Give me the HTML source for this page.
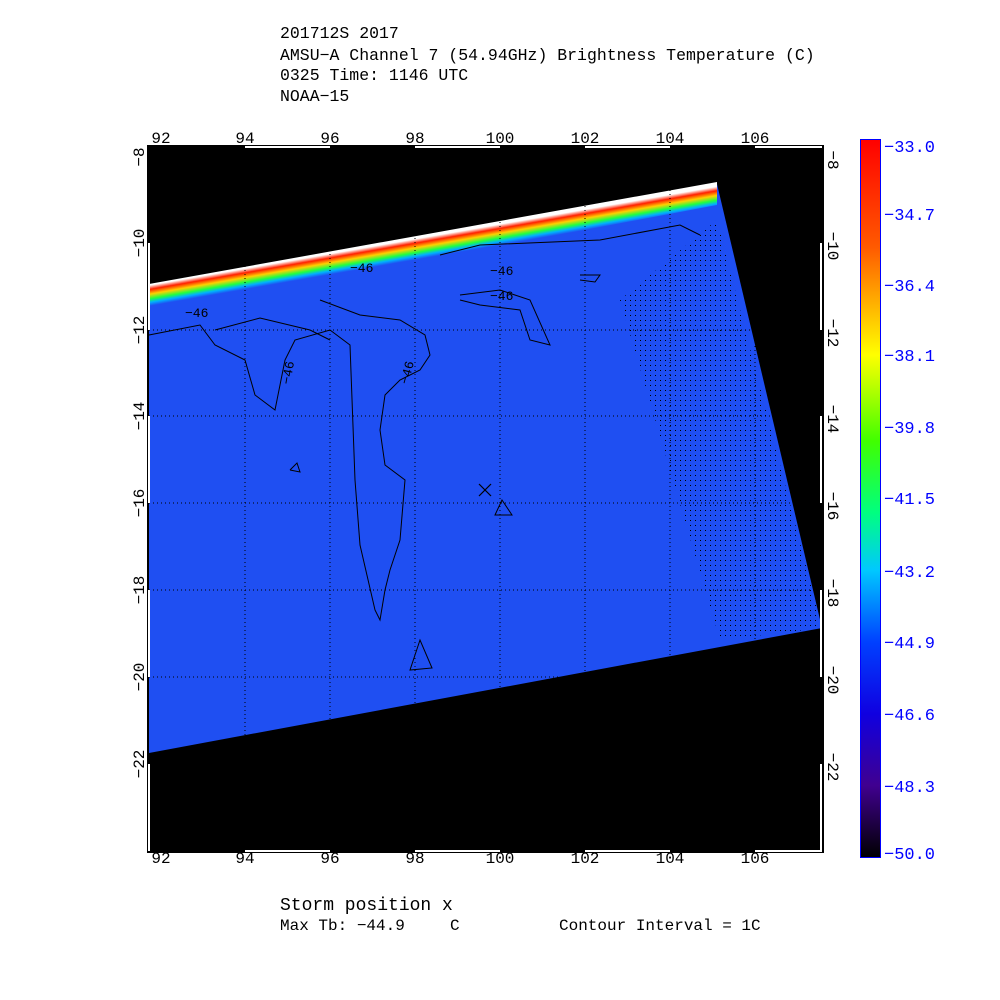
<!DOCTYPE html>
<html><head><style>
body{margin:0;background:#fff;}
svg{display:block;font-family:"Liberation Mono","DejaVu Sans Mono",monospace;}
</style></head><body>
<svg width="1000" height="1000" viewBox="0 0 1000 1000" xmlns="http://www.w3.org/2000/svg">
<defs>
<linearGradient id="cb" x1="0" y1="0" x2="0" y2="1">
<stop offset="0" stop-color="#ff0000"/>
<stop offset="0.15" stop-color="#ff5a00"/>
<stop offset="0.3" stop-color="#ffff00"/>
<stop offset="0.42" stop-color="#40ff00"/>
<stop offset="0.52" stop-color="#00ff80"/>
<stop offset="0.6" stop-color="#00c8ff"/>
<stop offset="0.7" stop-color="#0040ff"/>
<stop offset="0.8" stop-color="#1000e0"/>
<stop offset="0.9" stop-color="#400090"/>
<stop offset="1" stop-color="#000000"/>
</linearGradient>
<linearGradient id="band" gradientUnits="userSpaceOnUse" x1="433" y1="233" x2="437" y2="256">
<stop offset="0" stop-color="#fff"/>
<stop offset="0.12" stop-color="#fff"/>
<stop offset="0.3" stop-color="#ff2000"/>
<stop offset="0.5" stop-color="#ffd000"/>
<stop offset="0.7" stop-color="#20ff40"/>
<stop offset="0.85" stop-color="#00b0ff"/>
<stop offset="1" stop-color="#1f4ff2"/>
</linearGradient>
<pattern id="hatch" width="5" height="5" patternUnits="userSpaceOnUse">
<rect width="5" height="5" fill="#1f4ff2"/>
<rect x="0" y="0" width="1" height="1" fill="#000"/>
</pattern>
</defs>
<g font-size="16.5" fill="#000">
<text x="280" y="38">201712S 2017</text>
<text x="280" y="60">AMSU−A Channel 7 (54.94GHz) Brightness Temperature (C)</text>
<text x="280" y="80">0325 Time: 1146 UTC</text>
<text x="280" y="101">NOAA−15</text>
</g>
<rect x="147" y="145" width="677" height="708" fill="#000"/>
<polygon points="149,288 717,184 822,628 149,753" fill="#1f4ff2"/>
<polygon points="620,300 717,220 822,628 720,640" fill="url(#hatch)"/>
<polygon points="149,284 717,182 717,205 149,312" fill="url(#band)"/>
<polygon points="760,330 770,350 768,385 780,400 790,440 800,470 760,300" fill="#000"/>
<g stroke="#000" stroke-width="1" fill="none">
<polyline points="149,335 200,325 215,345 245,360 255,395 275,410 285,360 295,340 330,330 350,345 355,480 360,545 375,610 380,620 385,590 390,570 400,540 405,480 385,465 380,430 385,395 400,380 420,370 430,355 425,335 400,320 360,315 320,300"/>
<polyline points="215,330 260,318 310,330 330,340"/>
<polyline points="460,295 500,290 530,300 550,345 530,340 520,310 480,305 460,300"/>
<polyline points="580,275 600,275 595,282 580,280"/>
<polygon points="410,670 420,640 432,668"/>
<polygon points="495,515 502,500 512,515"/>
<polyline points="290,470 297,463 300,472 290,470"/>
<polyline points="440,255 480,245 600,240 680,225 700,235"/>
</g>
<g stroke="#000" stroke-dasharray="1,3" stroke-width="1">
<line x1="245" y1="146" x2="245" y2="851"/><line x1="330" y1="146" x2="330" y2="851"/>
<line x1="415" y1="146" x2="415" y2="851"/><line x1="500" y1="146" x2="500" y2="851"/>
<line x1="585" y1="146" x2="585" y2="851"/><line x1="670" y1="146" x2="670" y2="851"/>
<line x1="755" y1="146" x2="755" y2="851"/>
<line x1="149" y1="330" x2="822" y2="330"/><line x1="149" y1="416" x2="822" y2="416"/>
<line x1="149" y1="503" x2="822" y2="503"/><line x1="149" y1="590" x2="822" y2="590"/>
<line x1="149" y1="677" x2="822" y2="677"/>
</g>
<g stroke="#000" stroke-width="1.2"><line x1="479" y1="484" x2="491" y2="496"/><line x1="491" y1="484" x2="479" y2="496"/></g>
<rect x="147.5" y="145.5" width="676" height="707" fill="none" stroke="#000"/>
<g stroke="#fff" stroke-width="2">
<line x1="245" y1="147" x2="330" y2="147"/><line x1="415" y1="147" x2="500" y2="147"/><line x1="585" y1="147" x2="670" y2="147"/><line x1="755" y1="147" x2="822" y2="147"/>
<line x1="245" y1="851" x2="330" y2="851"/><line x1="415" y1="851" x2="500" y2="851"/><line x1="585" y1="851" x2="670" y2="851"/><line x1="755" y1="851" x2="822" y2="851"/>
<line x1="149" y1="243" x2="149" y2="330"/><line x1="149" y1="416" x2="149" y2="503"/><line x1="149" y1="590" x2="149" y2="677"/><line x1="149" y1="764" x2="149" y2="851"/>
<line x1="821" y1="243" x2="821" y2="330"/><line x1="821" y1="416" x2="821" y2="503"/><line x1="821" y1="590" x2="821" y2="677"/><line x1="821" y1="764" x2="821" y2="851"/>
</g>
<g font-size="16" fill="#000" text-anchor="middle">
<text x="161" y="143">92</text><text x="245" y="143">94</text><text x="330" y="143">96</text><text x="415" y="143">98</text><text x="500" y="143">100</text><text x="585" y="143">102</text><text x="670" y="143">104</text><text x="755" y="143">106</text>
<text x="161" y="863">92</text><text x="245" y="863">94</text><text x="330" y="863">96</text><text x="415" y="863">98</text><text x="500" y="863">100</text><text x="585" y="863">102</text><text x="670" y="863">104</text><text x="755" y="863">106</text>
</g>
<g font-size="16" fill="#000" text-anchor="middle">
<text transform="translate(144,157) rotate(-90)">−8</text><text transform="translate(144,243) rotate(-90)">−10</text><text transform="translate(144,330) rotate(-90)">−12</text><text transform="translate(144,416) rotate(-90)">−14</text><text transform="translate(144,503) rotate(-90)">−16</text><text transform="translate(144,590) rotate(-90)">−18</text><text transform="translate(144,677) rotate(-90)">−20</text><text transform="translate(144,764) rotate(-90)">−22</text>
<text transform="translate(828,160) rotate(90)">−8</text><text transform="translate(828,246) rotate(90)">−10</text><text transform="translate(828,333) rotate(90)">−12</text><text transform="translate(828,419) rotate(90)">−14</text><text transform="translate(828,506) rotate(90)">−16</text><text transform="translate(828,593) rotate(90)">−18</text><text transform="translate(828,680) rotate(90)">−20</text><text transform="translate(828,767) rotate(90)">−22</text>
</g>
<g font-size="13" fill="#000">
<text x="185" y="317">−46</text><text x="350" y="272">−46</text><text x="490" y="275">−46</text><text x="490" y="300">−46</text>
<text transform="translate(290,385) rotate(-80)">−46</text><text transform="translate(408,385) rotate(-75)">−46</text>
</g>
<rect x="860.5" y="139.5" width="20" height="718" fill="url(#cb)" stroke="#0000ff"/>
<g font-size="17" fill="#0000ff">
<text x="884" y="152">−33.0</text><text x="884" y="220">−34.7</text><text x="884" y="291">−36.4</text><text x="884" y="361">−38.1</text><text x="884" y="433">−39.8</text><text x="884" y="504">−41.5</text><text x="884" y="577">−43.2</text><text x="884" y="648">−44.9</text><text x="884" y="720">−46.6</text><text x="884" y="792">−48.3</text><text x="884" y="859">−50.0</text>
</g>
<g font-size="16" fill="#000">
<text x="280" y="910" font-size="18">Storm position x</text>
<text x="280" y="930">Max Tb: −44.9</text><text x="450" y="930">C</text>
<text x="559" y="930">Contour Interval = 1C</text>
</g>
</svg>
</body></html>
